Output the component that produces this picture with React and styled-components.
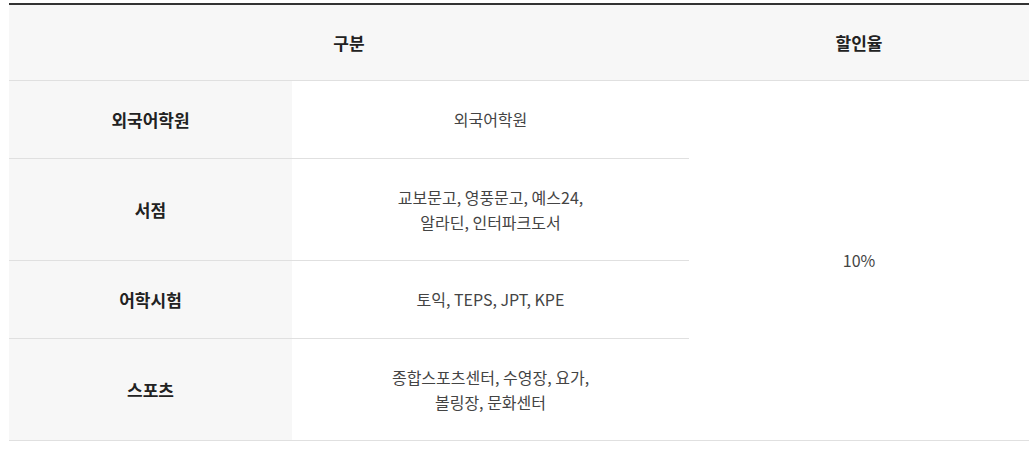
import React from 'react'
import styled, { createGlobalStyle } from 'styled-components'

const Global = createGlobalStyle`
  body {
    margin: 0;
    background: #fff;
    font-family: 'Noto Sans CJK KR', 'Noto Sans', sans-serif;
  }
`

const Wrap = styled.div`
  padding: 3px 3px 0 9px;
`

const Table = styled.table`
  width: 1020px;
  border-collapse: collapse;
  table-layout: fixed;
  border-top: 2px solid #333;
`

const Th = styled.th`
  height: 75px;
  padding: 0;
  background: #f7f7f7;
  border-bottom: 1px solid #e0e0e0;
  font-size: 17px;
  font-weight: 700;
  color: #222;
  text-align: center;
`

const Label = styled.th`
  height: ${props => props.tall ? '101px' : '77px'};
  padding: 0;
  background: #f7f7f7;
  border-bottom: 1px solid #e0e0e0;
  font-size: 17px;
  font-weight: 700;
  color: #222;
  text-align: center;
`

const Cell = styled.td`
  padding: 0;
  border-bottom: 1px solid #e0e0e0;
  font-size: 16px;
  line-height: 25px;
  color: #444;
  text-align: center;
  vertical-align: middle;
`

const rows = [
  { label: '외국어학원', lines: ['외국어학원'] },
  { label: '서점', lines: ['교보문고, 영풍문고, 예스24,', '알라딘, 인터파크도서'] },
  { label: '어학시험', lines: ['토익, TEPS, JPT, KPE'] },
  { label: '스포츠', lines: ['종합스포츠센터, 수영장, 요가,', '볼링장, 문화센터'] }
]

export default function App () {
  return (
    <Wrap>
      <Global />
      <Table>
        <colgroup>
          <col style={{ width: 283 }} />
          <col style={{ width: 397 }} />
          <col style={{ width: 340 }} />
        </colgroup>
        <thead>
          <tr>
            <Th colSpan={2}>구분</Th>
            <Th>할인율</Th>
          </tr>
        </thead>
        <tbody>
          {rows.map((r, i) => (
            <tr key={r.label}>
              <Label scope='row' tall={r.lines.length > 1}>{r.label}</Label>
              <Cell>
                {r.lines.map((l, j) => <div key={j}>{l}</div>)}
              </Cell>
              {i === 0 && <Cell rowSpan={4}>10%</Cell>}
            </tr>
          ))}
        </tbody>
      </Table>
    </Wrap>
  )
}
